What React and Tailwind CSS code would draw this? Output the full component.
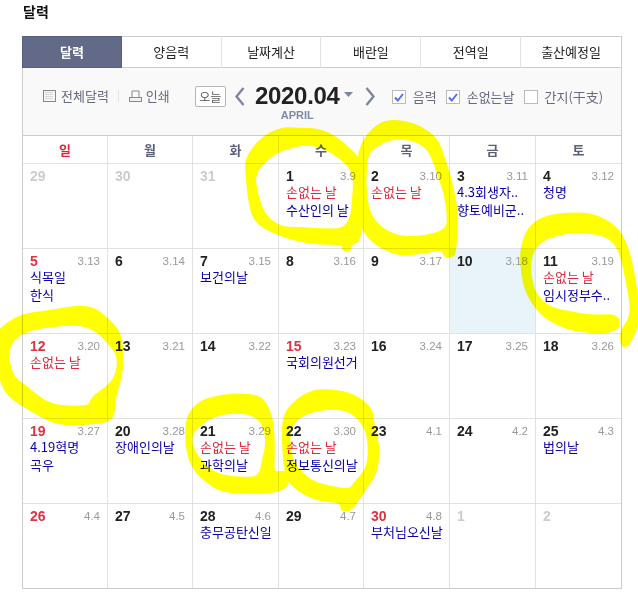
import React from 'react';

const KR = "font-['Noto_Sans_CJK_KR','Noto_Sans',sans-serif]";
const LAT = "font-['Liberation_Sans',sans-serif]";

const tabs = ['달력', '양음력', '날짜계산', '배란일', '전역일', '출산예정일'];
const weekdays = ['일', '월', '화', '수', '목', '금', '토'];

const NO_SON = { text: '손없는 날', red: true };
const h = (text) => ({ text });

// 5 weeks of April 2020: day, lunar date, muted, sunday-style red, events
const weeks = [
  [
    { d: 29, muted: true }, { d: 30, muted: true }, { d: 31, muted: true },
    { d: 1, l: '3.9', ev: [NO_SON, h('수산인의 날')] },
    { d: 2, l: '3.10', ev: [NO_SON] },
    { d: 3, l: '3.11', ev: [h('4.3회생자..'), h('향토예비군..')] },
    { d: 4, l: '3.12', ev: [h('청명')] },
  ],
  [
    { d: 5, l: '3.13', red: true, ev: [h('식목일'), h('한식')] },
    { d: 6, l: '3.14' },
    { d: 7, l: '3.15', ev: [h('보건의날')] },
    { d: 8, l: '3.16' },
    { d: 9, l: '3.17' },
    { d: 10, l: '3.18', today: true },
    { d: 11, l: '3.19', ev: [NO_SON, h('임시정부수..')] },
  ],
  [
    { d: 12, l: '3.20', red: true, ev: [NO_SON] },
    { d: 13, l: '3.21' },
    { d: 14, l: '3.22' },
    { d: 15, l: '3.23', red: true, ev: [h('국회의원선거')] },
    { d: 16, l: '3.24' },
    { d: 17, l: '3.25' },
    { d: 18, l: '3.26' },
  ],
  [
    { d: 19, l: '3.27', red: true, ev: [h('4.19혁명'), h('곡우')] },
    { d: 20, l: '3.28', ev: [h('장애인의날')] },
    { d: 21, l: '3.29', ev: [NO_SON, h('과학의날')] },
    { d: 22, l: '3.30', ev: [NO_SON, h('정보통신의날')] },
    { d: 23, l: '4.1' },
    { d: 24, l: '4.2' },
    { d: 25, l: '4.3', ev: [h('법의날')] },
  ],
  [
    { d: 26, l: '4.4', red: true },
    { d: 27, l: '4.5' },
    { d: 28, l: '4.6', ev: [h('충무공탄신일')] },
    { d: 29, l: '4.7' },
    { d: 30, l: '4.8', red: true, ev: [h('부처님오신날')] },
    { d: 1, muted: true },
    { d: 2, muted: true },
  ],
];

// marker scribbles traced from 3x crops: origin + contours in crop coords
const scribbles = [
  {
    o: [240, 115],
    rings: [
      [[120, 40], [180, 42], [240, 45], [290, 70], [330, 105], [358, 135], [365, 200], [362, 330], [355, 382], [330, 385], [330, 405], [310, 405], [310, 385], [240, 385], [170, 375], [110, 355], [50, 325], [30, 270], [20, 170], [20, 130], [60, 75]],
      [[150, 95], [200, 85], [250, 95], [300, 125], [335, 160], [345, 200], [340, 260], [335, 310], [310, 345], [250, 345], [180, 340], [120, 340], [70, 300], [50, 240], [40, 180], [70, 140], [110, 110]],
    ],
  },
  {
    o: [240, 115],
    rings: [
      [[355, 140], [365, 90], [400, 40], [450, 15], [530, 30], [590, 70], [610, 130], [630, 190], [645, 260], [650, 310], [645, 400], [640, 423], [612, 423], [612, 400], [560, 410], [480, 420], [420, 395], [380, 360], [360, 320], [355, 230]],
      [[400, 95], [460, 65], [530, 75], [570, 105], [590, 160], [615, 230], [625, 290], [625, 345], [560, 365], [480, 370], [420, 340], [385, 295], [375, 230], [375, 170], [380, 120]],
    ],
  },
  {
    o: [515, 205],
    rings: [
      [[310, 380], [200, 380], [130, 360], [70, 320], [30, 250], [20, 180], [20, 130], [40, 70], [90, 35], [170, 25], [240, 30], [300, 65], [330, 110], [350, 180], [365, 270], [370, 345], [350, 400], [335, 422], [320, 422], [320, 375], [345, 345], [350, 300], [335, 220], [320, 150], [300, 110], [260, 85], [180, 78], [110, 90], [60, 120], [42, 170], [45, 220], [60, 270], [100, 310], [170, 325], [240, 335], [310, 330]],
    ],
  },
  {
    o: [0, 300],
    rings: [
      [[120, 345], [170, 370], [250, 372], [340, 362], [340, 300], [360, 240], [368, 170], [360, 100], [320, 55], [280, 25], [230, 20], [150, 35], [70, 45], [25, 70], [-10, 100], [-15, 170], [0, 230], [20, 280], [60, 310]],
      [[270, 322], [180, 322], [130, 305], [70, 255], [40, 235], [25, 190], [20, 155], [40, 115], [90, 85], [170, 75], [240, 70], [290, 90], [330, 130], [358, 170], [350, 230], [320, 265], [275, 295]],
    ],
  },
  {
    o: [180, 385],
    rings: [
      [[20, 100], [50, 60], [90, 40], [170, 28], [240, 35], [265, 70], [278, 120], [280, 200], [278, 265], [300, 262], [325, 265], [322, 305], [280, 320], [220, 322], [130, 320], [80, 290], [40, 250], [20, 190]],
      [[45, 130], [90, 95], [150, 80], [220, 85], [255, 120], [262, 180], [250, 225], [240, 280], [170, 280], [110, 270], [70, 240], [40, 200], [30, 160]],
    ],
  },
  {
    o: [180, 385],
    rings: [
      [[310, 100], [335, 60], [390, 20], [450, 15], [520, 30], [575, 70], [578, 120], [595, 180], [590, 260], [555, 310], [530, 350], [510, 375], [485, 375], [485, 350], [420, 345], [360, 320], [320, 280], [310, 190]],
      [[330, 120], [370, 85], [430, 70], [500, 70], [550, 110], [570, 170], [565, 250], [525, 295], [510, 318], [440, 305], [390, 290], [340, 240], [325, 180]],
    ],
  },
];

const ringPath = (ring, o) => {
  const pts = ring.map(([x, y]) => [o[0] + x / 3, o[1] + y / 3]);
  const mid = (a, b) => [(a[0] + b[0]) / 2, (a[1] + b[1]) / 2];
  const start = mid(pts[pts.length - 1], pts[0]);
  let d = `M${start[0]},${start[1]}`;
  pts.forEach((p, i) => {
    const m = mid(p, pts[(i + 1) % pts.length]);
    d += ` Q${p[0]},${p[1]} ${m[0]},${m[1]}`;
  });
  return `${d} Z`;
};

const Check = ({ checked, label }) => (
  <div className="flex items-center">
    <span className="flex h-[14px] w-[14px] items-center justify-center border border-[#bbbbbb] bg-white">
      {checked && (
        <svg width="10" height="9" viewBox="0 0 10 9">
          <path d="M1 4.5 L3.8 7.5 L9 1" fill="none" stroke="#5570e8" strokeWidth="2" />
        </svg>
      )}
    </span>
    <span className={`ml-[7px] text-[13px] leading-[14px] text-[#666b7d] ${KR}`}>{label}</span>
  </div>
);

const Chevron = ({ right }) => (
  <svg width="10" height="19" viewBox="0 0 10 19" className="block">
    <path d={right ? 'M1.5 1 L8.5 9.5 L1.5 18' : 'M8.5 1 L1.5 9.5 L8.5 18'} fill="none" stroke="#7c849f" strokeWidth="2.4" />
  </svg>
);

const Cell = ({ cell, col, row }) => {
  const numColor = cell.muted ? 'text-[#cccccc]' : cell.red ? 'text-[#e0323f]' : 'text-[#222222]';
  return (
    <div
      className={`pl-[7px] pr-[7px] pt-[5px] ${row === 4 ? 'h-[84px]' : 'h-[85px] border-b border-b-[#e2e2e2]'} ${col < 6 ? 'border-r border-r-[#e2e2e2]' : ''} ${cell.today ? 'bg-[#e8f4fa] border-b-[#d3e0e8] border-r-[#d3e0e8]' : ''}`}
    >
      <div className="flex h-[14px] items-center justify-between">
        <span className={`text-[14px] font-bold leading-[14px] ${LAT} ${numColor}`}>{cell.d}</span>
        {cell.l && <span className={`text-[11.5px] leading-[14px] text-[#999999] ${LAT}`}>{cell.l}</span>}
      </div>
      {cell.ev && cell.ev.map((e, i) => (
        <div
          key={i}
          className={`whitespace-nowrap text-[13px] leading-[18px] ${KR} ${e.red ? 'text-[#dc2b3c]' : 'text-[#0a00a8]'}`}
        >
          {e.text}
        </div>
      ))}
    </div>
  );
};

export default function App() {
  return (
    <div className={`relative h-[595px] w-[638px] overflow-hidden bg-white ${KR}`}>
      <h1 className="pl-[23px] pt-[1px] text-[14px] font-bold leading-[21px] text-[#111111]">달력</h1>

      <div className="ml-[22px] mt-[14px] w-[600px] border border-[#cccccc]">
        {/* Tabs */}
        <div className="flex h-[31px] border-b border-[#cccccc]">
          {tabs.map((t, i) => (
            <div
              key={t}
              className={`-mt-px flex h-[32px] items-center justify-center text-[13px] ${
                i === 0
                  ? '-ml-px w-[100px] border border-[#565e7c] bg-[#626a88] font-bold text-white'
                  : `text-[#222222] ${i === 5 ? 'w-[100px]' : 'w-[100px] border-r border-[#e2e2e2]'}`
              }`}
            >
              {t}
            </div>
          ))}
        </div>

        {/* Toolbar */}
        <div className="flex h-[68px] items-start border-b border-[#cccccc] bg-[#f9f9f9] pl-[20px] pt-[18px]">
          <div className="flex h-[20px] items-center">
            <svg width="13" height="12" viewBox="0 0 13 12">
              <rect x="0.5" y="0.5" width="12" height="11" fill="#f6f6f6" stroke="#888888" />
              <path d="M2.5 2.5h8M2.5 4.5h8M2.5 6.5h8M2.5 8.5h8" stroke="#bbbbbb" strokeDasharray="1 1" />
            </svg>
            <span className="ml-[5px] text-[13px] leading-[14px] text-[#666b7d]">전체달력</span>
            <span className="ml-[9px] h-[12px] w-px bg-[#e4e4e4]" />
            <svg width="13" height="13" viewBox="0 0 13 13" className="ml-[10px]">
              <path d="M3 7V1h7v6" fill="#fafafa" stroke="#888888" />
              <rect x="0.5" y="7.5" width="12" height="4" fill="#f2f2f2" stroke="#888888" />
            </svg>
            <span className="ml-[4px] text-[13px] leading-[14px] text-[#666b7d]">인쇄</span>
          </div>

          <div className="ml-[25px] flex h-[21px] w-[31px] items-center justify-center rounded-[2px] border border-[#b5b5b5] bg-white text-[12px] text-[#555555]">
            오늘
          </div>
          <div className="ml-[9px] mt-px">
            <Chevron />
          </div>
          <div className="ml-[10px] flex w-[85px] flex-col items-center">
            <span className={`-mt-[4px] whitespace-nowrap text-[24px] font-bold leading-[27px] tracking-[-0.3px] text-[#222222] ${LAT}`}>
              2020.04
            </span>
            <span className={`-mt-[1px] text-[11px] font-bold leading-[14px] text-[#8089a8] ${LAT}`}>APRIL</span>
          </div>
          <svg width="9" height="5" viewBox="0 0 9 5" className="ml-[4px] mt-[6px]">
            <path d="M0 0h9L4.5 5z" fill="#7c849f" />
          </svg>
          <div className="ml-[12px] mt-px">
            <Chevron right />
          </div>
          <div className="ml-[17px] mt-[4px] flex gap-[9px]">
            <Check checked label="음력" />
            <Check checked label="손없는날" />
            <Check label="간지(干支)" />
          </div>
        </div>

        {/* Weekday header */}
        <div className="grid grid-cols-[85px_85px_86px_85px_86px_86px_85px]">
          {weekdays.map((w, i) => (
            <div
              key={w}
              className={`flex h-[28px] items-center justify-center border-b border-[#e2e2e2] text-[13px] font-bold ${i < 6 ? 'border-r' : ''} ${i === 0 ? 'text-[#d9283a]' : 'text-[#5a6078]'}`}
            >
              {w}
            </div>
          ))}
        </div>

        {/* Days */}
        <div className="grid grid-cols-[85px_85px_86px_85px_86px_86px_85px]">
          {weeks.map((week, r) => week.map((cell, c) => (
            <Cell key={`${r}-${c}`} cell={cell} col={c} row={r} />
          )))}
        </div>
      </div>

      {/* marker scribbles over the page */}
      <svg className="pointer-events-none absolute left-0 top-0 mix-blend-multiply" width="638" height="595" viewBox="0 0 638 595">
        {scribbles.map((s, i) => (
          <path key={i} d={s.rings.map((r) => ringPath(r, s.o)).join(' ')} fill="#ffff00" fillRule="evenodd" stroke="#ffff00" strokeWidth="3" strokeLinejoin="round" />
        ))}
      </svg>
    </div>
  );
}
